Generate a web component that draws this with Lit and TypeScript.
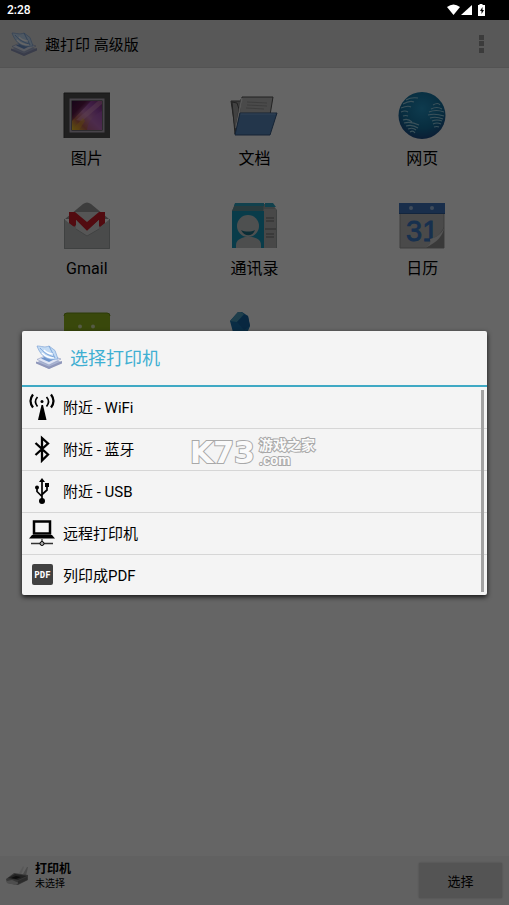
import { LitElement, html, css, nothing, type TemplateResult } from "lit";
import { customElement } from "lit/decorators.js";

const printLogo = () => html`<svg viewBox="0 0 28 28" aria-hidden="true">
  <path d="M1 19.500l12-5 14 4.500-13 7z" fill="#a9b4d2"/>
  <path d="M1 18.500l13 5 13-5.500v2.500l-13 5.500-13-5.500z" fill="#8f97ba"/>
  <path d="M2 16.500l11-5 13 4.500-12 6z" fill="#dfe5f4" stroke="#8f9ac0" stroke-width=".6"/>
  <path d="M6 15.500l8-3.500 8 3-8 4z" fill="#6f95cc"/>
  <path d="M2 3c5 0 7 2 12 0l6 4.500 3 8.500-7 .5C9 15 5 11 2 3z" fill="#c3dbf4" stroke="#7ea4d6" stroke-width=".7"/>
  <path d="M5 5c4 5 8 7 14 9M14 3l6 12" fill="none" stroke="#6f9bd4" stroke-width=".8"/>
  <path d="M9 7c3 3 6 4 9 4M7 10c4 4 7 5 12 5" fill="none" stroke="#fff" stroke-width="1.200"/>
</svg>`;

const photoIcon = html`<svg viewBox="0 0 48 48" aria-hidden="true">
  <defs>
    <linearGradient id="ph" x1="0" y1="1" x2="1" y2="0">
      <stop offset="0" stop-color="#f4d020"/><stop offset=".25" stop-color="#b8604c"/>
      <stop offset=".5" stop-color="#c878b8"/><stop offset=".75" stop-color="#a04cb0"/><stop offset="1" stop-color="#7a2c78"/>
    </linearGradient>
    <linearGradient id="pd" x1="0" y1="0" x2=".8" y2=".8">
      <stop offset="0" stop-color="#3c1040"/><stop offset=".45" stop-color="#5c1848"/><stop offset=".8" stop-color="#5c1848" stop-opacity="0"/>
    </linearGradient>
  </defs>
  <rect x="1" y="1" width="46" height="45" fill="#505050"/>
  <path d="M1 46V1h46" fill="none" stroke="#383838"/>
  <rect x="7.500" y="7.500" width="33" height="32" fill="#333" stroke="#b4abb9" stroke-width="2"/>
  <rect x="9" y="9" width="30" height="29" fill="url(#ph)"/>
  <path d="M9 9h19L9 29z" fill="url(#pd)"/>
  <path d="M13 28L35 9h4v3L19 29z" fill="#f4b0d0" opacity=".4"/>
  <path d="M9 38l11-12 2 3-6 9z" fill="#e8a828" opacity=".5"/>
  <path d="M24 38c1-9 7-15 15-19v19z" fill="#b460c4" opacity=".5"/>
</svg>`;

const docsIcon = html`<svg viewBox="0 0 48 48" aria-hidden="true">
  <path d="M1 9h10v-2h30l-5 35H6z" fill="#999" stroke="#555"/>
  <path d="M12 5h31l-4 24H8z" fill="#b8b8b8" stroke="#555"/>
  <path d="M17 10l20 1M17 13l20 1M16 16l18 1" stroke="#999" stroke-width="1"/>
  <path d="M2 10l5 1 2 6-4 25z" fill="#a4a4a4" stroke="#555"/>
  <path d="M12 6L6 36" stroke="#ddd" stroke-width="1.500"/>
  <path d="M10 21h37l-7 22H5z" fill="#5888bc" stroke="#345680"/>
  <path d="M10.500 22h35" stroke="#7ca6d4"/>
</svg>`;

const webIcon = html`<svg viewBox="0 0 48 48" aria-hidden="true">
  <defs><radialGradient id="gl" cx=".5" cy=".35" r=".65">
    <stop offset="0" stop-color="#2494c4"/><stop offset=".65" stop-color="#14719f"/><stop offset="1" stop-color="#1c4a84"/>
  </radialGradient></defs>
  <circle cx="24" cy="23.500" r="23.500" fill="url(#gl)"/>
  <g fill="none" stroke="#94cbe0" stroke-width="1.100">
    <path d="M8 8q5-3 12-2M5 12q7-4 11-2M3 16q7-3 10-1M3 20q4-2 7 0M5 24q3-1 5 0"/>
    <path d="M5 28q5-2 9 2M6 31q7-2 15 2M8 34q6-2 12 2M10 37q5-2 8 1M12 40q3-2 5 1"/>
    <path d="M35 13q5-3 7 0M33 17q6-3 11 0M31 20q7-3 15 0M30 23q7-2 16 1M32 26q6-2 13 1M34 29q5-2 10 0M35 32q4-2 8 0M36 35q3-1 5 0"/>
  </g>
</svg>`;

const gmailIcon = html`<svg viewBox="0 0 48 48" aria-hidden="true">
  <path d="M2 17L20 2q4-3 8 0l18 15z" fill="#999"/>
  <path d="M6 10h36v26H6z" fill="#d4d4d4"/>
  <path d="M6 22V10h6l12 10 12-10h6v12l-6 4v-8L24 29 13 18v8z" fill="#cc1c28"/>
  <path d="M1 17l10 8 2-2v-3l11 10 11-10v3l2 2 10-8v30H1z" fill="#b9bcbc"/>
  <path d="M13 18l11 11 12-11v9l-12 7-11-7z" fill="#d8d8d8"/>
  <path d="M1.500 17v29.500h45V17M13 27l11 7 12-7" fill="none" stroke="#989c9c" stroke-width=".8"/>
</svg>`;

const contactsIcon = html`<svg viewBox="0 0 48 48" aria-hidden="true">
  <path d="M2 9l3-7h37l5 6v38H34z" fill="#9ca4a4"/>
  <path d="M2 9l3-7h29l-1 7z" fill="#64949c"/>
  <path d="M5 1h29v3H4zM35 1h8l3 4H35z" fill="#2ca4c0"/>
  <path d="M34 7h12v39H34z" fill="#b4b4b4"/>
  <path d="M36 16h8M36 19h8M36 32h8M36 35h8" stroke="#707070"/>
  <path d="M35 27h11" stroke="#707070"/>
  <rect x="2" y="9" width="32" height="37" fill="#1797ba"/>
  <path d="M6 46v-3c0-5 5-7 9-8h7c5 1 9 3 9 8v3z" fill="#c0c4c4"/>
  <circle cx="18" cy="24" r="11" fill="#c4c8c8"/>
  <path d="M11 28c4 2 10 2 14 0-2 7-11 7-14 0z" fill="#1d7288"/>
</svg>`;

const calendarIcon = html`<svg class="calendar" viewBox="0 0 48 48" aria-hidden="true">
  <path d="M2 11h44v35H2z" fill="#b9b9b9" stroke="#999"/>
  <path d="M1 1h46v11H1z" fill="#3f74bc"/>
  <path d="M1 11h46v1H1z" fill="#315c98"/>
  <circle cx="13" cy="6" r="2" fill="#a0bce0"/><circle cx="34" cy="6" r="2" fill="#a0bce0"/>
  <text x="8" y="39" font-size="29" fill="#3a78c4" stroke="#3a78c4" stroke-width=".8">31</text>
  <path d="M28 46c5-4 4-6 4-9 6-1 10-4 14-12v21z" fill="#909090"/>
  <path d="M27 46c5-3 6-6 5-9 5-1 11-4 14-11-1 7-6 14-19 20z" fill="#d4d4d4"/>
</svg>`;

const androidIcon = html`<svg viewBox="0 0 48 48" aria-hidden="true">
  <rect x="1" y="1" width="46" height="46" rx="2" fill="#8fb41c"/>
  <path d="M1 4q0-3 3-3h40q3 0 3 3" fill="none" stroke="#6f9014"/>
  <circle cx="17" cy="14.500" r="2" fill="#d4e0ac"/><circle cx="30" cy="14.500" r="2" fill="#d4e0ac"/>
</svg>`;

const boxIcon = html`<svg viewBox="0 0 48 48" aria-hidden="true">
  <path d="M0 9L8 0q2-1 4 0l6 4 2 10-4 10H4z" fill="#1a72ac"/>
  <path d="M0 9L8 0q2-1 3 0l3 2-7 8z" fill="#4c9cbc"/>
  <path d="M7 10l7-7 4 1 2 10-6 4z" fill="#1662a0"/>
</svg>`;

const tiles: { label?: string; icon: TemplateResult }[] = [
  { label: "图片", icon: photoIcon },
  { label: "文档", icon: docsIcon },
  { label: "网页", icon: webIcon },
  { label: "Gmail", icon: gmailIcon },
  { label: "通讯录", icon: contactsIcon },
  { label: "日历", icon: calendarIcon },
  { icon: androidIcon },
  { icon: boxIcon },
];

const options: { label: string; icon: TemplateResult }[] = [
  {
    label: "附近 - WiFi",
    icon: html`<svg viewBox="0 0 28 28" aria-hidden="true">
      <path d="M13.500 12h1.500l3.500 15h-8.500z"/><circle cx="14" cy="8.500" r="1.500"/>
      <g fill="none" stroke="#000">
        <path d="M9.500 4q-4 4.500 0 9.500M18.500 4q4 4.500 0 9.500" stroke-width="1.700"/>
        <path d="M5 1.500q-5 6.500 0 13M23 1.500q5 6.500 0 13" stroke-width="2.200"/>
      </g></svg>`,
  },
  {
    label: "附近 - 蓝牙",
    icon: html`<svg viewBox="0 0 28 28" aria-hidden="true">
      <path d="M7.500 8l12.500 11.500-6 6V3l6 5.500L7.500 20" fill="none" stroke="#000" stroke-width="2.300"/></svg>`,
  },
  {
    label: "附近 - USB",
    icon: html`<svg viewBox="0 0 28 28" aria-hidden="true">
      <path d="M14 1l3 4h-6z"/><circle cx="14" cy="24" r="3"/><circle cx="9" cy="10.500" r="2"/><path d="M17 6h4v4h-4z"/>
      <path d="M14 4v19M9 11v3.500l5 5M19 9v4l-5 4.500" fill="none" stroke="#000" stroke-width="1.700"/></svg>`,
  },
  {
    label: "远程打印机",
    icon: html`<svg viewBox="0 0 28 28" aria-hidden="true">
      <path d="M6 2.500h16v12H6z" fill="none" stroke="#000" stroke-width="2.500"/>
      <path d="M4 16h20l3 3.500H1z"/>
      <path d="M3 24.500h22" stroke="#333" stroke-width="1.500"/>
      <circle cx="14" cy="24.500" r="2" fill="#aaa" stroke="#000" stroke-width="1"/><path d="M13.500 20h1v3h-1z"/></svg>`,
  },
  {
    label: "列印成PDF",
    icon: html`<svg class="pdf" viewBox="0 0 28 28" aria-hidden="true">
      <rect x="4" y="4" width="21" height="21" rx="2" fill="#414141"/>
      <text x="14.500" y="18" font-size="9" text-anchor="middle" fill="#fff">PDF</text></svg>`,
  },
];

@customElement("app-root")
export class AppRoot extends LitElement {
  static styles = css`
    :host {
      display: flex;
      flex-direction: column;
      position: relative;
      min-height: 100vh;
      background: #fdfdfd;
      color: #000;
      font-family: Roboto, "Noto Sans CJK SC", sans-serif;
    }
    * { box-sizing: border-box; }
    svg { display: block; width: 100%; height: 100%; }
    button { font: inherit; color: inherit; border: 0; padding: 0; margin: 0; background: none; }
    h1, h2, p, ul { margin: 0; padding: 0; font-weight: 400; }
    ul { list-style: none; }
    .status {
      display: flex;
      align-items: center;
      justify-content: space-between;
      height: 20px;
      padding: 0 22px 0 7px;
      background: #000;
      color: #fff;
      font-size: 12px;
      font-weight: 500;
    }
    .signals { width: 40px; height: 14px; }
    .bar {
      display: flex;
      align-items: center;
      height: 48px;
      padding: 0 12px 0 10px;
      background: #dcdcdc;
      border-bottom: 1px solid #d0d0d0;
    }
    .logo { width: 28px; height: 28px; flex: none; }
    .bar h1 { flex: 1; margin-left: 7px; font-size: 15px; }
    .more { width: 30px; height: 30px; }
    .tiles {
      flex: 1;
      display: grid;
      grid-template-columns: repeat(3, 1fr);
      grid-auto-rows: 110px;
      align-content: start;
      padding: 24px 3px 0;
    }
    .tile {
      display: flex;
      flex-direction: column;
      align-items: center;
      gap: 7px;
      width: 100%;
      font-size: 16px;
      line-height: 24px;
    }
    .art { display: block; width: 48px; height: 48px; }
    .calendar { font-family: "Liberation Sans", sans-serif; font-weight: 400; }
    .foot {
      display: flex;
      align-items: center;
      height: 49px;
      padding: 0 7px 0 5px;
      background: #f3f3f3;
    }
    .printer { width: 25px; height: 25px; margin: 0 5px 8px 0; }
    .who { flex: 1; align-self: flex-start; padding-top: 6px; }
    .who strong { display: block; font-size: 12px; line-height: 15px; }
    .who p { font-size: 10px; line-height: 14px; }
    .choose { width: 83px; height: 35px; background: #d2d2d2; font-size: 13px; box-shadow: 0 0 2px #bbb; }
    .backdrop {
      position: absolute;
      inset: 20px 0 0;
      display: flex;
      align-items: center;
      padding: 1px 22px 0;
      background: rgba(0, 0, 0, 0.6);
    }
    .dialog {
      position: relative;
      flex: 1;
      background: #f4f4f4;
      border-radius: 2px;
      box-shadow: 0 2px 5px rgba(0, 0, 0, 0.8);
    }
    .head {
      display: flex;
      align-items: center;
      gap: 7px;
      height: 56px;
      padding: 0 0 2px 13px;
      border-bottom: 2px solid #3fa9c4;
      color: #3fafd2;
    }
    .head h2 { font-size: 18px; }
    .option {
      display: flex;
      align-items: center;
      gap: 7px;
      width: 100%;
      height: 42px;
      padding: 0 0 2px 6px;
      border-bottom: 1px solid #d6d6d6;
      font-size: 15px;
      text-align: left;
    }
    li:last-child .option { height: 40px; border-bottom: 0; }
    .glyph { width: 28px; height: 28px; flex: none; }
    .pdf { font-family: "DejaVu Sans Mono", monospace; font-weight: 700; }
    .thumb {
      position: absolute;
      right: 3px;
      top: 59px;
      bottom: 3px;
      width: 3px;
      background: #a2a2a2;
    }
    .mark {
      position: absolute;
      inset: 104px 0 auto;
      display: flex;
      justify-content: center;
      align-items: center;
      gap: 4px;
      padding-right: 4px;
      color: #fafafa;
      -webkit-text-stroke: 2px #a8a8a8;
      paint-order: stroke fill;
      pointer-events: none;
      font-weight: 700;
    }
    .mark .big { font-family: "DejaVu Sans", sans-serif; font-size: 30px; line-height: 36px; }
    .mark .small { display: grid; font-size: 14px; line-height: 15px; }
  `;

  render() {
    return html`
      <div class="status">
        <span>2:28</span>
        <span class="signals"><svg viewBox="0 0 40 14" fill="#fff" aria-hidden="true">
          <path d="M0 4q6.500-5 13 0L6.500 12z"/><path d="M25 2v10H14z"/>
          <path d="M31 2h1.500V1h3v1H38v11h-7z"/><path d="M35.500 4L33 8h1.500v3L37 7h-1.500z" fill="#000"/>
        </svg></span>
      </div>
      <header class="bar">
        <span class="logo">${printLogo()}</span>
        <h1>趣打印 高级版</h1>
        <button class="more"><svg viewBox="0 0 30 30" fill="#949494" aria-hidden="true">
          <path d="M12 6h5v5h-5zM12 12h5v5h-5zM12 19h5v5h-5z"/>
        </svg></button>
      </header>
      <main class="tiles">
        ${tiles.map((t) => html`<button class="tile">
          <span class="art">${t.icon}</span>${t.label ? html`<span>${t.label}</span>` : nothing}
        </button>`)}
      </main>
      <footer class="foot">
        <span class="printer"><svg viewBox="0 0 25 25" aria-hidden="true">
          <path d="M14 9l4-7 1 1-3 8z" fill="#ddd"/><path d="M18 10l4-7h1l-2 9z" fill="#bcbcbc"/>
          <path d="M1 15l8-6 14 2v5l-10 5-11-2z" fill="#888"/>
          <path d="M3 14l7-4 12 2-9 4z" fill="#555"/>
          <path d="M6 14l5-2 5 1-5 2z" fill="#222"/>
          <path d="M2 17l5-1 7 3-4 2-8-2z" fill="#c3c3c3"/>
          <path d="M13 17l9-4v3l-9 4z" fill="#6b6b6b"/>
        </svg></span>
        <div class="who"><strong>打印机</strong><p>未选择</p></div>
        <button class="choose">选择</button>
      </footer>
      <div class="backdrop">
        <section class="dialog" role="dialog" aria-labelledby="title">
          <div class="head"><span class="logo">${printLogo()}</span><h2 id="title">选择打印机</h2></div>
          <ul>
            ${options.map((o) => html`<li><button class="option">
              <span class="glyph">${o.icon}</span><span>${o.label}</span>
            </button></li>`)}
          </ul>
          <div class="thumb"></div>
          <div class="mark"><span class="big">K73</span>
            <span class="small"><span>游戏之家</span><span>.com</span></span></div>
        </section>
      </div>
    `;
  }
}
